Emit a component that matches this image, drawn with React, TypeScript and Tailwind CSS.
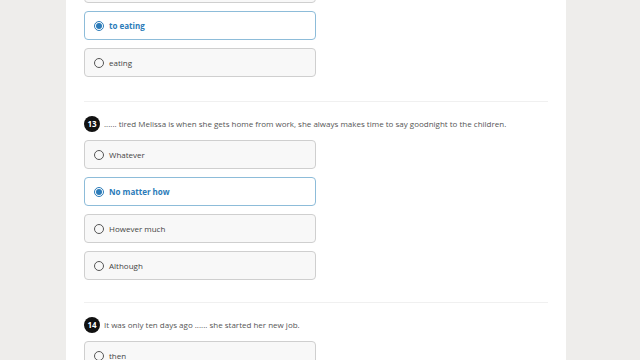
import React from 'react';

type Question = {
  num?: number;
  text?: string;
  options: string[];
  selected?: number;
};

const questions: Question[] = [
  { options: ['to eat', 'to eating', 'eating'], selected: 1 },
  {
    num: 13,
    text: '...... tired Melissa is when she gets home from work, she always makes time to say goodnight to the children.',
    options: ['Whatever', 'No matter how', 'However much', 'Although'],
    selected: 1,
  },
  {
    num: 14,
    text: 'It was only ten days ago ...... she started her new job.',
    options: ['then', 'since', 'that', 'when'],
  },
];

function Radio({ on }: { on: boolean }) {
  if (on) {
    return (
      <span className="w-[10px] h-[10px] rounded-full border border-[#2b7bb9] flex items-center justify-center shrink-0">
        <span className="w-[6px] h-[6px] rounded-full bg-[#2b7bb9]" />
      </span>
    );
  }
  return <span className="w-[10px] h-[10px] rounded-full border border-[#555] shrink-0" />;
}

function Option({ label, on }: { label: string; on: boolean }) {
  return (
    <div
      className={
        on
          ? 'w-[232px] h-[29px] shrink-0 rounded-[4px] border border-[#8dbcd9] bg-white flex items-center gap-[5px] pl-[9px]'
          : 'w-[232px] h-[29px] shrink-0 rounded-[4px] border border-[#cfcfcf] bg-[#f8f8f8] flex items-center gap-[5px] pl-[9px]'
      }
    >
      <Radio on={on} />
      <span
        className={
          on ? 'text-[8px] font-bold text-[#2b7bb9]' : 'text-[8px] text-[#444]'
        }
      >
        {label}
      </span>
    </div>
  );
}

export default function App() {
  return (
    <div className="h-[360px] overflow-hidden bg-[#eeedeb] font-['Open_Sans',sans-serif]">
      <div className="w-[500px] ml-[66px] bg-white px-[18px] h-full flex flex-col">
        {questions.map((q, i) => (
          <div
            key={i}
            className={
              i === 0
                ? 'mt-[-26px] pb-[24px] border-b border-[#f0f0f0] shrink-0'
                : 'pt-[14px] pb-[22px] border-b border-[#f0f0f0] shrink-0'
            }
          >
            {q.num && (
              <div className="flex items-center gap-[4px] h-[16px] mb-[8px]">
                <span className="w-[16px] h-[16px] rounded-full bg-[#111] text-white text-[8px] font-bold flex items-center justify-center">
                  {q.num}
                </span>
                <span className="text-[8px] text-[#555]">{q.text}</span>
              </div>
            )}
            <div className="flex flex-col gap-[8px]">
              {q.options.map((o, j) => (
                <Option key={o} label={o} on={q.selected === j} />
              ))}
            </div>
          </div>
        ))}
      </div>
    </div>
  );
}
